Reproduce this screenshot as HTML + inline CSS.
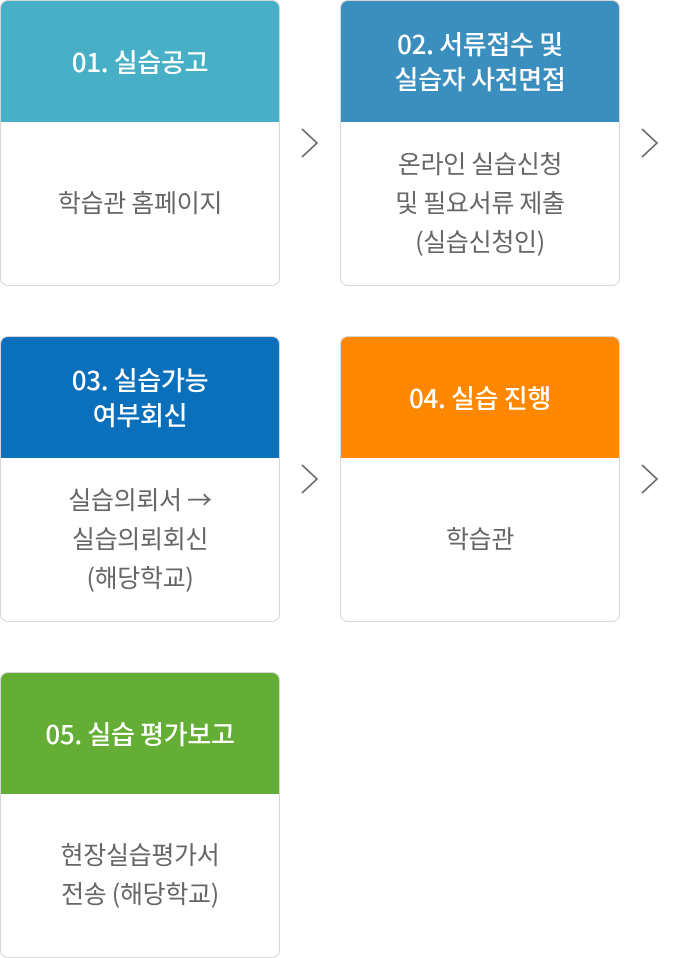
<!DOCTYPE html>
<html><head><meta charset="utf-8"><style>
body{margin:0;width:680px;height:958px;background:#fff;font-family:"Noto Sans CJK KR",sans-serif;position:relative;overflow:hidden}
.c{position:absolute;width:278px;height:284px;border:1px solid #d6d6d6;border-radius:8px;overflow:hidden;box-sizing:content-box}
.h{height:122px;margin:-1px -1px 0;display:flex;align-items:center;justify-content:center;text-align:center;color:#fff;font-size:26px;font-weight:500;line-height:35px;letter-spacing:-0.3px}
.b{height:160px;display:flex;align-items:center;justify-content:center;text-align:center;color:#666;font-size:25px;line-height:39px;letter-spacing:-0.3px}
svg{position:absolute}
</style></head><body>
<div class="c" style="left:0;top:0"><div class="h" style="background:#48b0c6">01. 실습공고</div><div class="b">학습관 홈페이지</div></div>
<div class="c" style="left:340px;top:0"><div class="h" style="background:#3b8fbf">02. 서류접수 및<br>실습자 사전면접</div><div class="b">온라인 실습신청<br>및 필요서류 제출<br>(실습신청인)</div></div>
<div class="c" style="left:0;top:336px"><div class="h" style="background:#0a70bb">03. 실습가능<br>여부회신</div><div class="b">실습의뢰서 →<br>실습의뢰회신<br>(해당학교)</div></div>
<div class="c" style="left:340px;top:336px"><div class="h" style="background:#ff8800">04. 실습 진행</div><div class="b">학습관</div></div>
<div class="c" style="left:0;top:672px"><div class="h" style="background:#64ae35">05. 실습 평가보고</div><div class="b">현장실습평가서<br>전송 (해당학교)</div></div>
<svg style="left:300px;top:127px" width="20" height="34"><path d="M2 2 L17 16 L2 30" fill="none" stroke="#666" stroke-width="1.6"/></svg>
<svg style="left:640px;top:127px" width="20" height="34"><path d="M2 2 L17 16 L2 30" fill="none" stroke="#666" stroke-width="1.6"/></svg>
<svg style="left:300px;top:463px" width="20" height="34"><path d="M2 2 L17 16 L2 30" fill="none" stroke="#666" stroke-width="1.6"/></svg>
<svg style="left:640px;top:463px" width="20" height="34"><path d="M2 2 L17 16 L2 30" fill="none" stroke="#666" stroke-width="1.6"/></svg>
</body></html>
